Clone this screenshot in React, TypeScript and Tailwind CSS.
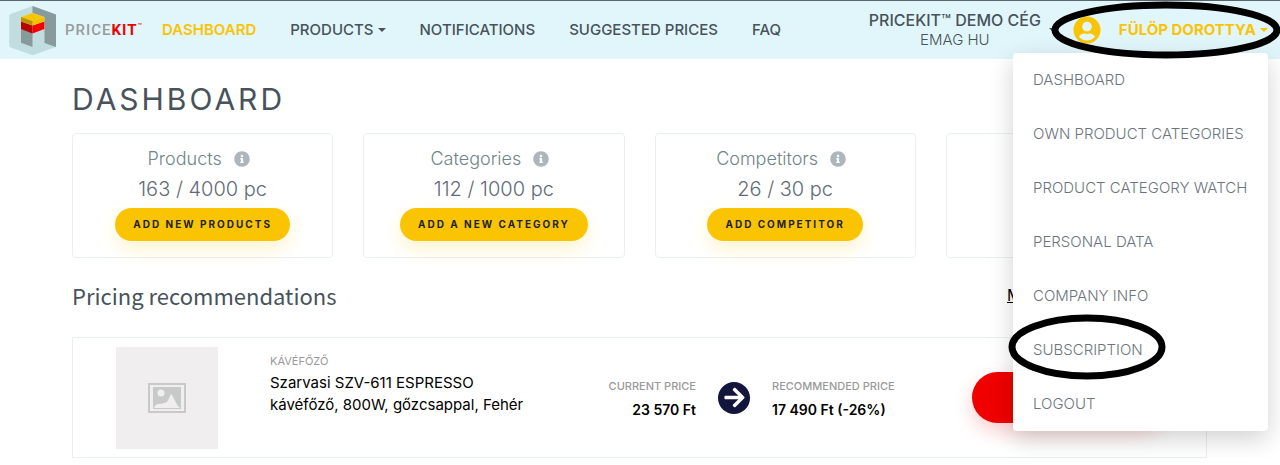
import type { ReactNode } from 'react';
import { FaArrowRight, FaInfoCircle, FaUserCircle } from 'react-icons/fa';

const navLinks = [
  { label: 'DASHBOARD', active: true },
  { label: 'PRODUCTS', dropdown: true },
  { label: 'NOTIFICATIONS' },
  { label: 'SUGGESTED PRICES' },
  { label: 'FAQ' },
];

const stats = [
  { title: 'Products', value: '163 / 4000 pc', action: 'ADD NEW PRODUCTS' },
  { title: 'Categories', value: '112 / 1000 pc', action: 'ADD A NEW CATEGORY' },
  { title: 'Competitors', value: '26 / 30 pc', action: 'ADD COMPETITOR' },
];

const menuItems = [
  'DASHBOARD',
  'OWN PRODUCT CATEGORIES',
  'PRODUCT CATEGORY WATCH',
  'PERSONAL DATA',
  'COMPANY INFO',
  'SUBSCRIPTION',
  'LOGOUT',
];

function Caret() {
  return <span className="inline-block border-x-4 border-t-4 border-x-transparent border-t-current" />;
}

function Logo() {
  return (
    <a href="#" aria-label="PriceKit" className="flex shrink-0 items-center gap-2">
      <svg width="48" height="51" viewBox="9 4 48 51">
        <path d="M32.5 5 56 13.5V46L32.5 54.3 9.3 46V13.5Z" fill="#c2dde0" />
        <path d="M32.5 5 56 13.5V46L44.5 42V16L32.5 12Z" fill="#879a9c" />
        <path d="M21 27 32.5 31V46L21 41.7Z" fill="#879a9c" />
        <path d="M21 20.5 32.5 24.5V32.5L21 28Z" fill="#b80000" />
        <path d="M44.3 20.5 32.5 24.5V32.5L44.3 28Z" fill="#f40000" />
        <path d="M21 16 32.5 12 44.3 16 32.5 20Z" fill="#fdc500" />
        <path d="M44.3 16 32.5 20V24.5L44.3 20.5Z" fill="#f5c000" />
        <path d="M21 16 32.5 20V24.5L21 20.5Z" fill="#bd9300" />
      </svg>
      <span className="flex items-start font-[Roboto] text-[15px] leading-5 font-medium tracking-[1px] text-[#999b9b]">
        PRICE<span className="font-bold text-[#f00000]">KIT</span>
        <span className="text-[7px] leading-3 tracking-normal text-[#f00000]">™</span>
      </span>
    </a>
  );
}

function Marker({ className, children }: { className: string; children: ReactNode }) {
  return (
    <svg className={`pointer-events-none absolute overflow-visible ${className}`} fill="none" stroke="#000" strokeWidth="7">
      {children}
    </svg>
  );
}

function UserMenu() {
  return (
    <div className="absolute top-[52px] right-3 z-10 w-[255px] rounded bg-white shadow-[0_8px_24px_rgba(0,0,0,0.18)]">
      {menuItems.map((item) => (
        <a key={item} href="#" className="relative flex h-[54px] items-center px-5 text-[15px] font-light whitespace-nowrap text-[#6c757d]">
          {item}
          {item === 'SUBSCRIPTION' && (
            <Marker className="top-[-9px] left-[-4px] h-[66px] w-[157px]">
              <ellipse cx="78" cy="33" rx="75" ry="29" />
            </Marker>
          )}
        </a>
      ))}
    </div>
  );
}

function Header() {
  return (
    <header className="relative flex h-[59px] items-center border-t border-[#59646b] bg-[#e1f6fa] pr-3 pl-[9px] text-[#47525b]">
      <Logo />
      <nav className="ml-5 flex items-center gap-[34px] text-[15px] font-medium whitespace-nowrap">
        {navLinks.map((link) => (
          <a key={link.label} href="#" className={`flex items-center gap-1 ${link.active ? 'font-semibold text-[#fbc403]' : ''}`}>
            {link.label}
            {link.dropdown && <Caret />}
          </a>
        ))}
      </nav>
      <button className="ml-auto flex shrink-0 items-center gap-2 leading-5 whitespace-nowrap">
        <span>
          <span className="block text-base leading-5 font-medium">PRICEKIT™ DEMO CÉG</span>
          <span className="block text-[15px] font-light">EMAG HU</span>
        </span>
        <Caret />
      </button>
      <button className="ml-4 flex shrink-0 items-center gap-[18px] text-[15px] font-bold whitespace-nowrap text-[#fbc403]">
        <FaUserCircle size={28} />
        <span className="flex items-center gap-1">
          FÜLÖP DOROTTYA
          <Caret />
        </span>
      </button>
      <UserMenu />
      <Marker className="top-0 right-0 z-20 h-[58px] w-[228px]">
        <ellipse cx="114" cy="29" rx="111" ry="25" />
      </Marker>
    </header>
  );
}

function StatCard({ title, value, action }: { title: string; value: string; action: string }) {
  return (
    <div className="flex h-[125px] flex-col items-center rounded border border-[#e9f0f0] pt-[13px]">
      <div className="flex h-6 items-center gap-3 pr-2 text-lg font-light text-[#6f8587]">
        {title}
        <FaInfoCircle size={16} className="text-[#adb5bd]" />
      </div>
      <div className="text-xl leading-[37px] font-light text-[#5f6b75]">{value}</div>
      <button className="h-[33px] rounded-full bg-[#fbc403] px-[18px] text-[10px] font-bold tracking-[2px] text-[#212529] shadow-[0_8px_20px_rgba(251,196,3,0.2)]">
        {action}
      </button>
    </div>
  );
}

function Recommendation() {
  return (
    <article className="mt-[26px] flex h-[121px] items-center border border-[#e9f0f0] pr-10 pl-[43px]">
      <div className="flex size-[102px] shrink-0 items-center justify-center bg-[#f0eeef]">
        <svg width="38" height="30" viewBox="0 0 38 30">
          <path d="M1 1H37V29H1Z" fill="none" stroke="#c8caca" strokeWidth="2" />
          <path d="M5 4H33V26H5Z" fill="#c8caca" />
          <circle cx="13" cy="10" r="3.5" fill="#f0eeef" />
          <path d="M6 25C8 19 12 22 16 20 20 20 21 15 23 11 26 14 28 22 32 25Z" fill="#f0eeef" />
        </svg>
      </div>
      <div className="ml-[52px] w-[264px] shrink-0 pb-[30px] text-[15px] leading-[22px] text-black">
        <p className="text-[11px] text-[#999]">KÁVÉFŐZŐ</p>
        <p>Szarvasi SZV-611 ESPRESSO kávéfőző, 800W, gőzcsappal, Fehér</p>
      </div>
      <div className="ml-auto shrink-0 text-right text-sm leading-6 font-semibold">
        <p className="text-[11px] font-medium text-[#999]">CURRENT PRICE</p>
        <p>23 570 Ft</p>
      </div>
      <span className="mx-[22px] flex size-8 shrink-0 items-center justify-center rounded-full bg-[#14153c] text-white">
        <FaArrowRight size={23} />
      </span>
      <div className="w-[200px] shrink-0 text-sm leading-6 font-semibold">
        <p className="text-[11px] font-medium text-[#999]">RECOMMENDED PRICE</p>
        <p>17 490 Ft (-26%)</p>
      </div>
      <button aria-label="Apply price" className="h-[51px] w-[194px] shrink-0 rounded-full bg-[#f00000] shadow-[0_8px_20px_rgba(240,0,0,0.2)]" />
    </article>
  );
}

export default function App() {
  return (
    <div className="bg-white font-[Inter,sans-serif]">
      <Header />
      <main className="pr-[73px] pl-[72px]">
        <h1 className="pt-5 text-[30px] leading-10 tracking-[3px] text-[#47525b]">DASHBOARD</h1>
        <section className="mt-[14px] grid grid-cols-4 gap-[30px]">
          {stats.map((stat) => (
            <StatCard key={stat.title} {...stat} />
          ))}
          <div className="rounded border border-[#e9f0f0]" />
        </section>
        <section className="pt-[21px]">
          <div className="flex items-center justify-between">
            <h2 className="font-['Noto_Sans_CJK_JP',sans-serif] text-[22px] leading-8 text-[#47525b]">Pricing recommendations</h2>
            <a href="#" className="w-[200px] text-base text-black underline">M</a>
          </div>
          <Recommendation />
        </section>
      </main>
    </div>
  );
}
